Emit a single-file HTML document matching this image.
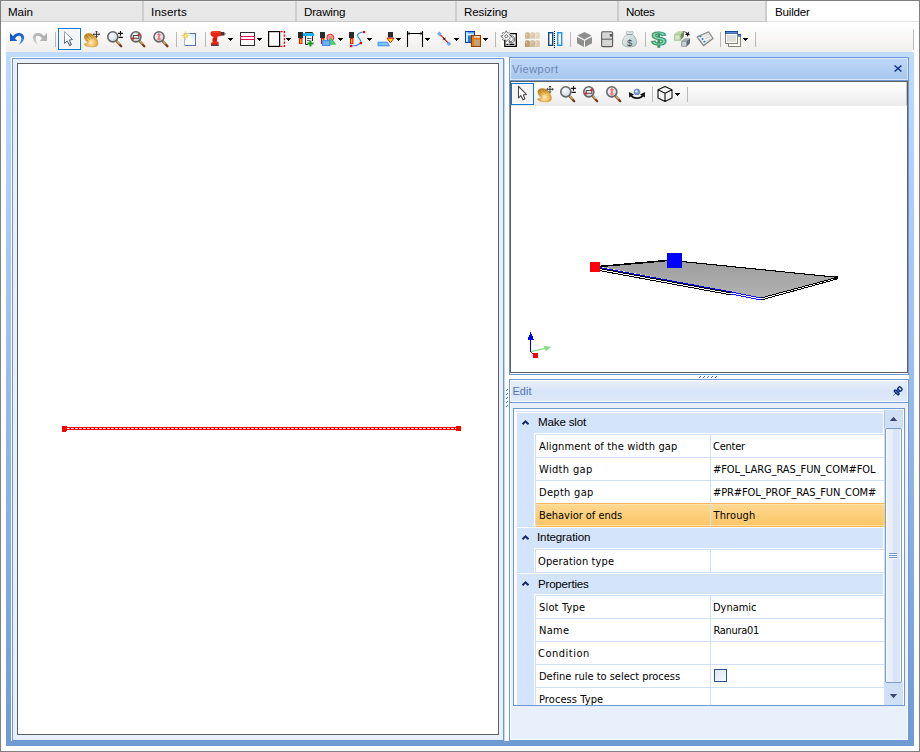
<!DOCTYPE html>
<html><head><meta charset="utf-8"><title>Builder</title>
<style>
html,body{margin:0;padding:0}
body{width:920px;height:752px;position:relative;overflow:hidden;background:#fff;font:11px "Liberation Sans",sans-serif;color:#000}
div,span,svg{position:absolute;box-sizing:border-box}
.t{white-space:nowrap;line-height:13px;height:13px}
</style></head>
<body>
<div style="left:0px;top:0px;width:920px;height:752px;border:1px solid #7f7f7f;background:#fff"></div>
<div style="left:1px;top:1px;width:918px;height:20px;background:linear-gradient(#f0f0f0 0,#f0f0f0 1px,#e7e7e7 1px)"></div>
<div style="left:1px;top:21px;width:918px;height:1px;background:#c9c9c9"></div>
<div style="left:142px;top:1px;width:2px;height:20px;background:#cdcdcd"></div>
<div style="left:295px;top:1px;width:2px;height:20px;background:#cdcdcd"></div>
<div style="left:455px;top:1px;width:2px;height:20px;background:#cdcdcd"></div>
<div style="left:617px;top:1px;width:2px;height:20px;background:#cdcdcd"></div>
<div style="left:765px;top:1px;width:2px;height:20px;background:#cdcdcd"></div>
<div style="left:767px;top:1px;width:152px;height:20px;background:#fff"></div>
<div style="left:767px;top:21px;width:152px;height:1px;background:#e2e2e2"></div>
<span class="t" style="z-index:3;left:8.00px;top:5px;font-family:'Liberation Sans',sans-serif;font-size:11.6px;letter-spacing:-0.094px;">Main</span>
<span class="t" style="z-index:3;left:151.00px;top:5px;font-family:'Liberation Sans',sans-serif;font-size:11.6px;letter-spacing:0.167px;">Inserts</span>
<span class="t" style="z-index:3;left:304.00px;top:5px;font-family:'Liberation Sans',sans-serif;font-size:11.6px;letter-spacing:-0.180px;">Drawing</span>
<span class="t" style="z-index:3;left:464.00px;top:5px;font-family:'Liberation Sans',sans-serif;font-size:11.6px;letter-spacing:-0.145px;">Resizing</span>
<span class="t" style="z-index:3;left:626.00px;top:5px;font-family:'Liberation Sans',sans-serif;font-size:11.6px;letter-spacing:-0.372px;">Notes</span>
<span class="t" style="z-index:3;left:775.00px;top:5px;font-family:'Liberation Sans',sans-serif;font-size:11.6px;letter-spacing:-0.205px;">Builder</span>
<div style="left:6px;top:27px;width:907px;height:25px;background:linear-gradient(#fdfdfd,#f7f6f5 50%,#f0eeec);border-radius:2px"></div>
<div style="left:913px;top:29px;width:1px;height:21px;background:#bdbdbd"></div>
<div style="left:55px;top:32px;width:1px;height:15px;background:#b9b9b9"></div>
<div style="left:176px;top:32px;width:1px;height:15px;background:#b9b9b9"></div>
<div style="left:205px;top:32px;width:1px;height:15px;background:#b9b9b9"></div>
<div style="left:495px;top:32px;width:1px;height:15px;background:#b9b9b9"></div>
<div style="left:570px;top:32px;width:1px;height:15px;background:#b9b9b9"></div>
<div style="left:645px;top:32px;width:1px;height:15px;background:#b9b9b9"></div>
<div style="left:720px;top:32px;width:1px;height:15px;background:#b9b9b9"></div>
<div style="left:755px;top:32px;width:1px;height:15px;background:#b9b9b9"></div>
<div style="left:58px;top:28px;width:23px;height:22px;border:1px solid #0a78d7;background:#f4f4f4;box-shadow:inset 0 0 0 1px #fcfaf5"></div>
<div style="left:228px;top:38px;width:5px;height:1px;background:#000"></div>
<div style="left:229px;top:39px;width:3px;height:1px;background:#000"></div>
<div style="left:230px;top:40px;width:1px;height:1px;background:#000"></div>
<div style="left:257px;top:38px;width:5px;height:1px;background:#000"></div>
<div style="left:258px;top:39px;width:3px;height:1px;background:#000"></div>
<div style="left:259px;top:40px;width:1px;height:1px;background:#000"></div>
<div style="left:286px;top:38px;width:5px;height:1px;background:#000"></div>
<div style="left:287px;top:39px;width:3px;height:1px;background:#000"></div>
<div style="left:288px;top:40px;width:1px;height:1px;background:#000"></div>
<div style="left:338px;top:38px;width:5px;height:1px;background:#000"></div>
<div style="left:339px;top:39px;width:3px;height:1px;background:#000"></div>
<div style="left:340px;top:40px;width:1px;height:1px;background:#000"></div>
<div style="left:367px;top:38px;width:5px;height:1px;background:#000"></div>
<div style="left:368px;top:39px;width:3px;height:1px;background:#000"></div>
<div style="left:369px;top:40px;width:1px;height:1px;background:#000"></div>
<div style="left:396px;top:38px;width:5px;height:1px;background:#000"></div>
<div style="left:397px;top:39px;width:3px;height:1px;background:#000"></div>
<div style="left:398px;top:40px;width:1px;height:1px;background:#000"></div>
<div style="left:425px;top:38px;width:5px;height:1px;background:#000"></div>
<div style="left:426px;top:39px;width:3px;height:1px;background:#000"></div>
<div style="left:427px;top:40px;width:1px;height:1px;background:#000"></div>
<div style="left:454px;top:38px;width:5px;height:1px;background:#000"></div>
<div style="left:455px;top:39px;width:3px;height:1px;background:#000"></div>
<div style="left:456px;top:40px;width:1px;height:1px;background:#000"></div>
<div style="left:483px;top:38px;width:5px;height:1px;background:#000"></div>
<div style="left:484px;top:39px;width:3px;height:1px;background:#000"></div>
<div style="left:485px;top:40px;width:1px;height:1px;background:#000"></div>
<div style="left:743px;top:38px;width:5px;height:1px;background:#000"></div>
<div style="left:744px;top:39px;width:3px;height:1px;background:#000"></div>
<div style="left:745px;top:40px;width:1px;height:1px;background:#000"></div>
<div style="left:6px;top:52px;width:908px;height:694px;background:linear-gradient(#bfdbff,#6f9bd3)"></div>
<div style="left:11px;top:57px;width:898px;height:684px;background:#fff"></div>
<div style="left:12px;top:58px;width:492px;height:683px;border:1px solid #6f97d4;background:#e8f0fb"></div>
<div style="left:504px;top:59px;width:1px;height:682px;background:#bcd6f7"></div>
<div style="left:17px;top:63px;width:482px;height:672px;border:1px solid #5f5f5f;background:#fff"></div>
<div style="left:67px;top:427px;width:390px;height:3px;background:#ff0000"></div>
<div style="left:67px;top:428px;width:390px;height:1px;background:repeating-linear-gradient(90deg,#fff 0,#fff 2px,#ff8a8a 2px,#ff8a8a 3px,#f00 3px,#f00 4px)"></div>
<div style="left:62px;top:426px;width:5px;height:5px;background:#ff0000"></div>
<div style="left:62px;top:431px;width:4px;height:1px;background:#ff0000"></div>
<div style="left:456px;top:426px;width:5px;height:5px;background:#ff0000"></div>
<div style="left:509px;top:57px;width:400px;height:318px;border:1px solid #6f97d4;background:#fff"></div>
<div style="left:510px;top:58px;width:398px;height:22px;background:#dce9fb"></div>
<div style="left:511px;top:59px;width:396px;height:20px;background:linear-gradient(#bcd7f9,#a8c7ee)"></div>
<div style="left:510px;top:80px;width:398px;height:1px;background:#6f97d4"></div>
<div style="left:510px;top:81px;width:398px;height:292px;border:1px solid #5f5f5f;background:#fff"></div>
<div style="left:511px;top:82px;width:396px;height:24px;background:linear-gradient(#ffffff,#ececec)"></div>
<div style="left:906px;top:82px;width:1px;height:23px;background:#c4c4c4"></div>
<span class="t" style="z-index:3;left:512.00px;top:63px;font-family:'Liberation Sans',sans-serif;font-size:11px;letter-spacing:0.494px;color:#6e86b4">Viewport</span>
<div style="left:511px;top:83px;width:23px;height:22px;border:1px solid #0a78d7;background:#f4f4f4;box-shadow:inset 0 0 0 1px #fcfaf5"></div>
<div style="left:652px;top:87px;width:1px;height:15px;background:#b9b9b9"></div>
<div style="left:687px;top:87px;width:1px;height:15px;background:#b9b9b9"></div>
<div style="left:675px;top:93px;width:5px;height:1px;background:#000"></div>
<div style="left:676px;top:94px;width:3px;height:1px;background:#000"></div>
<div style="left:677px;top:95px;width:1px;height:1px;background:#000"></div>
<svg style="left:0;top:0" width="920" height="752" viewBox="0 0 920 752" fill="#3b6fc9" shape-rendering="crispEdges"><rect x="700" y="376" width="1" height="1"/><rect x="699" y="377" width="1" height="1"/><rect x="704" y="376" width="1" height="1"/><rect x="703" y="377" width="1" height="1"/><rect x="708" y="376" width="1" height="1"/><rect x="707" y="377" width="1" height="1"/><rect x="712" y="376" width="1" height="1"/><rect x="711" y="377" width="1" height="1"/><rect x="716" y="376" width="1" height="1"/><rect x="715" y="377" width="1" height="1"/><rect x="507" y="389" width="1" height="1"/><rect x="506" y="390" width="1" height="1"/><rect x="507" y="393" width="1" height="1"/><rect x="506" y="394" width="1" height="1"/><rect x="507" y="397" width="1" height="1"/><rect x="506" y="398" width="1" height="1"/><rect x="507" y="401" width="1" height="1"/><rect x="506" y="402" width="1" height="1"/><rect x="507" y="405" width="1" height="1"/><rect x="506" y="406" width="1" height="1"/></svg>
<div style="left:509px;top:379px;width:400px;height:362px;border:1px solid #6f97d4;background:#fff"></div>
<div style="left:511px;top:381px;width:396px;height:20px;background:linear-gradient(#e9eff9,#d7e5f8 55%,#dfe9f9)"></div>
<div style="left:510px;top:402px;width:398px;height:1px;background:#6f97d4"></div>
<div style="left:511px;top:403px;width:396px;height:336px;background:#e8f0fb"></div>
<span class="t" style="z-index:3;left:512.50px;top:385px;font-family:'Liberation Sans',sans-serif;font-size:11px;letter-spacing:0.034px;color:#5373b0">Edit</span>
<div style="left:513px;top:408px;width:392px;height:298px;border:1px solid #6f97d4;background:#fff"></div>
<div style="left:884px;top:410px;width:19px;height:295px;background:#cfdff5"></div>
<div style="left:884px;top:410px;width:1px;height:18px;background:#a9c3ea"></div>
<div style="left:902px;top:429px;width:1px;height:253px;background:#fff"></div>
<div style="left:885px;top:428px;width:17px;height:255px;border:1px solid #7b9bc8;border-radius:2px;background:linear-gradient(90deg,#fff 0,#fff 1px,#e9f0fb 1px,#e6eefa 45%,#d7e4f5 50%,#dbe7f7 14px,#fff 14px)"></div>
<svg style="left:885px;top:410px" width="18" height="295" viewBox="885 410 18 295"><polygon points="889.8,421 897.2,421 893.5,416.8" fill="#3d4668"/><polygon points="889.8,694 897.2,694 893.5,698.2" fill="#3d4668"/></svg>
<div style="left:889px;top:553px;width:8px;height:1px;background:#7a98c8"></div>
<div style="left:889px;top:554px;width:8px;height:1px;background:#f4f8fd"></div>
<div style="left:889px;top:555px;width:8px;height:1px;background:#7a98c8"></div>
<div style="left:889px;top:556px;width:8px;height:1px;background:#f4f8fd"></div>
<div style="left:889px;top:557px;width:8px;height:1px;background:#7a98c8"></div>
<div style="left:889px;top:558px;width:8px;height:1px;background:#f4f8fd"></div>
<div style="left:514px;top:409px;width:371px;height:296px;overflow:hidden">
<div style="left:2px;top:2px;width:369px;height:1px;background:#cfdff5"></div>
<div style="left:3px;top:4px;width:366px;height:20px;background:#d4e4fa"></div>
<svg style="left:7px;top:10px" width="9" height="7" viewBox="0 0 9 7"><path d="M1.5 5.3 L4.5 2.4 L7.5 5.3" fill="none" stroke="#15286b" stroke-width="2"/></svg>
<span class="t" style="z-index:3;left:24.00px;top:6px;font-family:'Liberation Sans',sans-serif;font-size:11.6px;letter-spacing:-0.174px;">Make slot</span>
<div style="left:21px;top:25px;width:350px;height:1px;background:#cfdff5"></div>
<div style="left:3px;top:24px;width:17px;height:93px;background:#d4e4fa"></div>
<div style="left:21px;top:25px;width:1px;height:92px;background:#cfdff5"></div>
<div style="left:196px;top:26px;width:1px;height:22px;background:#cfdff5"></div>
<span class="t" style="z-index:3;left:25.00px;top:31px;font-family:'DejaVu Sans Condensed',sans-serif;font-size:11px;letter-spacing:0.133px;">Alignment of the width gap</span>
<span class="t" style="z-index:3;left:199.00px;top:31px;font-family:'DejaVu Sans Condensed',sans-serif;font-size:11px;letter-spacing:-0.249px;">Center</span>
<div style="left:22px;top:48px;width:349px;height:1px;background:#cfdff5"></div>
<div style="left:196px;top:49px;width:1px;height:22px;background:#cfdff5"></div>
<span class="t" style="z-index:3;left:25.00px;top:54px;font-family:'DejaVu Sans Condensed',sans-serif;font-size:11px;letter-spacing:0.347px;">Width gap</span>
<span class="t" style="z-index:3;left:199.00px;top:54px;font-family:'DejaVu Sans Condensed',sans-serif;font-size:11px;letter-spacing:-0.083px;">#FOL_LARG_RAS_FUN_COM#FOL</span>
<div style="left:22px;top:71px;width:349px;height:1px;background:#cfdff5"></div>
<div style="left:196px;top:72px;width:1px;height:22px;background:#cfdff5"></div>
<span class="t" style="z-index:3;left:25.00px;top:77px;font-family:'DejaVu Sans Condensed',sans-serif;font-size:11px;letter-spacing:0.295px;">Depth gap</span>
<span class="t" style="z-index:3;left:199.00px;top:77px;font-family:'DejaVu Sans Condensed',sans-serif;font-size:11px;letter-spacing:-0.108px;">#PR#FOL_PROF_RAS_FUN_COM#</span>
<div style="left:22px;top:94px;width:349px;height:1px;background:#cfdff5"></div>
<div style="left:22px;top:94px;width:349px;height:24px;background:linear-gradient(#fbb660 0,#fbb660 1px,#fee0a6 1px,#fee0a6 2px,#fdd890 2px,#fcc766 22px,#fedfa4 22px,#fedfa4 23px,#fbb660 23px);z-index:2"></div>
<div style="left:196px;top:94px;width:1px;height:24px;background:#cfdff5;z-index:2"></div>
<span class="t" style="z-index:3;left:25.00px;top:100px;font-family:'DejaVu Sans Condensed',sans-serif;font-size:11px;letter-spacing:-0.027px;">Behavior of ends</span>
<span class="t" style="z-index:3;left:199.50px;top:100px;font-family:'DejaVu Sans Condensed',sans-serif;font-size:11px;letter-spacing:0.125px;">Through</span>
<div style="left:2px;top:117px;width:369px;height:1px;background:#cfdff5"></div>
<div style="left:3px;top:119px;width:366px;height:20px;background:#d4e4fa"></div>
<svg style="left:7px;top:125px" width="9" height="7" viewBox="0 0 9 7"><path d="M1.5 5.3 L4.5 2.4 L7.5 5.3" fill="none" stroke="#15286b" stroke-width="2"/></svg>
<span class="t" style="z-index:3;left:23.00px;top:121px;font-family:'Liberation Sans',sans-serif;font-size:11.6px;letter-spacing:-0.134px;">Integration</span>
<div style="left:21px;top:140px;width:350px;height:1px;background:#cfdff5"></div>
<div style="left:3px;top:139px;width:17px;height:24px;background:#d4e4fa"></div>
<div style="left:21px;top:140px;width:1px;height:23px;background:#cfdff5"></div>
<div style="left:196px;top:141px;width:1px;height:22px;background:#cfdff5"></div>
<span class="t" style="z-index:3;left:24.00px;top:146px;font-family:'DejaVu Sans Condensed',sans-serif;font-size:11px;letter-spacing:0.123px;">Operation type</span>
<div style="left:22px;top:163px;width:349px;height:1px;background:#cfdff5"></div>
<div style="left:2px;top:163px;width:369px;height:1px;background:#cfdff5"></div>
<div style="left:3px;top:165px;width:366px;height:20px;background:#d4e4fa"></div>
<svg style="left:7px;top:171px" width="9" height="7" viewBox="0 0 9 7"><path d="M1.5 5.3 L4.5 2.4 L7.5 5.3" fill="none" stroke="#15286b" stroke-width="2"/></svg>
<span class="t" style="z-index:3;left:24.00px;top:168px;font-family:'Liberation Sans',sans-serif;font-size:11.6px;letter-spacing:-0.227px;">Properties</span>
<div style="left:21px;top:186px;width:350px;height:1px;background:#cfdff5"></div>
<div style="left:3px;top:185px;width:17px;height:116px;background:#d4e4fa"></div>
<div style="left:21px;top:186px;width:1px;height:115px;background:#cfdff5"></div>
<div style="left:196px;top:187px;width:1px;height:22px;background:#cfdff5"></div>
<span class="t" style="z-index:3;left:25.00px;top:192px;font-family:'DejaVu Sans Condensed',sans-serif;font-size:11px;letter-spacing:0.178px;">Slot Type</span>
<span class="t" style="z-index:3;left:199.00px;top:192px;font-family:'DejaVu Sans Condensed',sans-serif;font-size:11px;letter-spacing:-0.034px;">Dynamic</span>
<div style="left:22px;top:209px;width:349px;height:1px;background:#cfdff5"></div>
<div style="left:196px;top:210px;width:1px;height:22px;background:#cfdff5"></div>
<span class="t" style="z-index:3;left:25.00px;top:215px;font-family:'DejaVu Sans Condensed',sans-serif;font-size:11px;letter-spacing:0.298px;">Name</span>
<span class="t" style="z-index:3;left:199.50px;top:215px;font-family:'DejaVu Sans Condensed',sans-serif;font-size:11px;letter-spacing:-0.310px;">Ranura01</span>
<div style="left:22px;top:232px;width:349px;height:1px;background:#cfdff5"></div>
<div style="left:196px;top:233px;width:1px;height:22px;background:#cfdff5"></div>
<span class="t" style="z-index:3;left:24.00px;top:238px;font-family:'DejaVu Sans Condensed',sans-serif;font-size:11px;letter-spacing:0.506px;">Condition</span>
<div style="left:22px;top:255px;width:349px;height:1px;background:#cfdff5"></div>
<div style="left:196px;top:256px;width:1px;height:22px;background:#cfdff5"></div>
<span class="t" style="z-index:3;left:25.00px;top:261px;font-family:'DejaVu Sans Condensed',sans-serif;font-size:11px;letter-spacing:-0.009px;">Define rule to select process</span>
<div style="left:200px;top:260px;width:13px;height:13px;border:1px solid #2a4f8f;background:linear-gradient(135deg,#dfe6ee,#f7f9fb)"></div>
<div style="left:22px;top:278px;width:349px;height:1px;background:#cfdff5"></div>
<div style="left:196px;top:279px;width:1px;height:22px;background:#cfdff5"></div>
<span class="t" style="z-index:3;left:25.00px;top:284px;font-family:'DejaVu Sans Condensed',sans-serif;font-size:11px;letter-spacing:0.081px;">Process Type</span>
<div style="left:22px;top:301px;width:349px;height:1px;background:#cfdff5"></div>
</div>

<svg style="left:511px;top:106px" width="396" height="266" viewBox="511 106 396 266">
<defs><linearGradient id="pl" x1="0" y1="0" x2="0" y2="1"><stop offset="0" stop-color="#9d9d9d"/><stop offset="1" stop-color="#b2b2b2"/></linearGradient></defs>
<g shape-rendering="crispEdges">
<polygon points="599,266.5 670,260 837,277 761,297.5" fill="url(#pl)"/>
<polyline points="599,266.5 670,260.3" fill="none" stroke="#000" stroke-width="1.6"/><polyline points="670,260.3 837,277.3" fill="none" stroke="#000" stroke-width="1.1"/>
<line x1="599" y1="267.5" x2="731" y2="291.944" stroke="#0000e6" stroke-width="1"/>
<line x1="599" y1="268.5" x2="731" y2="292.944" stroke="#000" stroke-width="1"/>
<line x1="599" y1="269.5" x2="731" y2="293.944" stroke="#fff" stroke-width="1"/>
<line x1="599" y1="270.5" x2="731" y2="294.944" stroke="#000" stroke-width="1"/>
<line x1="731.5" y1="291.444" x2="731.5" y2="295.444" stroke="#000" stroke-width="1"/>
<line x1="731" y1="291.944" x2="761" y2="298" stroke="#1414ff" stroke-width="1"/>
<line x1="731" y1="292.944" x2="761" y2="299" stroke="#fff" stroke-width="1"/>
<line x1="731" y1="293.944" x2="761" y2="300" stroke="#1414ff" stroke-width="1"/>
<line x1="761" y1="298" x2="837" y2="277.5" stroke="#000" stroke-width="1"/>
<line x1="761" y1="299" x2="837" y2="278.5" stroke="#fff" stroke-width="1"/>
<line x1="761" y1="300" x2="837" y2="279" stroke="#000" stroke-width="1"/>
<rect x="835" y="276" width="3" height="3" fill="#000"/>
<rect x="590" y="262" width="10" height="10" fill="#ff0000"/>
<rect x="667" y="253" width="15" height="15" fill="#0000ff"/>
<rect x="530" y="338" width="1.3" height="14" fill="#0000ff"/>
<polygon points="530.6,331.6 527.6,340 534,340" fill="#0000ff"/>
<rect x="533" y="353" width="5" height="5" fill="#ff0000"/>
</g>
<line x1="531" y1="352" x2="534" y2="355" stroke="#f00" stroke-width="1"/>
<line x1="531" y1="351.6" x2="545" y2="348.4" stroke="#7fe07f" stroke-width="1.2"/>
<polygon points="543.6,346 551.2,346.8 546,351" fill="#7fe07f"/>
</svg>
<svg style="left:0;top:0" width="920" height="110" viewBox="0 0 920 110">
<defs>
<radialGradient id="lensg" cx="0.38" cy="0.35" r="0.75"><stop offset="0" stop-color="#fbfcfd"/><stop offset="0.55" stop-color="#dde5ea"/><stop offset="1" stop-color="#b9c6cf"/></radialGradient>
<linearGradient id="undog" x1="0" y1="0" x2="1" y2="1"><stop offset="0" stop-color="#0a4ec6"/><stop offset="0.6" stop-color="#1c68d8"/><stop offset="1" stop-color="#7fb0ee"/></linearGradient>
<linearGradient id="redog" x1="1" y1="0" x2="0" y2="1"><stop offset="0" stop-color="#a9a9a9"/><stop offset="0.6" stop-color="#b9b9b9"/><stop offset="1" stop-color="#e4e4e4"/></linearGradient>
<radialGradient id="handg" cx="0.5" cy="0.68" r="0.62"><stop offset="0" stop-color="#fdebbc"/><stop offset="0.5" stop-color="#f0c060"/><stop offset="1" stop-color="#c48a24"/></radialGradient>
<linearGradient id="docg" x1="1" y1="0" x2="0.2" y2="0.8"><stop offset="0" stop-color="#bfe0fb"/><stop offset="0.5" stop-color="#f4faff"/><stop offset="1" stop-color="#ffffff"/></linearGradient>
<linearGradient id="tang" x1="0" y1="0" x2="1" y2="0"><stop offset="0" stop-color="#cfb08a"/><stop offset="1" stop-color="#e0ccb2"/></linearGradient>
<linearGradient id="tang2" x1="0" y1="0" x2="1" y2="0"><stop offset="0" stop-color="#b48a5c"/><stop offset="1" stop-color="#d6bd9e"/></linearGradient>
<linearGradient id="bagg" x1="0" y1="0" x2="1" y2="1"><stop offset="0" stop-color="#f2f6f6"/><stop offset="1" stop-color="#b4c6c6"/></linearGradient>
<linearGradient id="wing" x1="0" y1="0" x2="1" y2="1"><stop offset="0" stop-color="#cfcfcf"/><stop offset="1" stop-color="#ececec"/></linearGradient>
<linearGradient id="curg" gradientUnits="userSpaceOnUse" x1="64" y1="31" x2="72" y2="46"><stop offset="0" stop-color="#a9bbd9"/><stop offset="0.55" stop-color="#5f7599"/><stop offset="1" stop-color="#1f2f4f"/></linearGradient>
<linearGradient id="curf" gradientUnits="userSpaceOnUse" x1="64" y1="31" x2="72" y2="46"><stop offset="0" stop-color="#ffffff"/><stop offset="0.6" stop-color="#ffffff"/><stop offset="1" stop-color="#c8d2ec"/></linearGradient>
</defs>

<!-- undo -->
<path d="M10 33 L10 41 L17.4 41 L15 38.6 C16.4 35.9 20 34.6 21.2 37.4 C21.9 39.8 20.4 42.6 18.6 44.8 C22.4 43 24.8 39.6 24 36.4 C23 32.4 16.4 31.6 13 36.2 Z" fill="url(#undog)"/>
<!-- redo -->
<path d="M47 33 L47 41 L39.6 41 L42 38.6 C40.6 35.9 37 34.6 35.8 37.4 C35.1 39.8 36.6 42.6 38.4 44.8 C34.6 43 32.2 39.6 33 36.4 C34 32.4 40.6 31.6 44 36.2 Z" fill="url(#redog)"/>
<!-- cursor -->
<path d="M64.5 31.4 L64.5 43.4 L67.3 40.8 L69.6 45.6 L71.3 44.7 L69.3 40 L72.5 39.5 Z" fill="url(#curf)" stroke="url(#curg)" stroke-width="1" stroke-linejoin="round"/>
<g transform="translate(83,31)">
 <path d="M1.3 5.4 C1.5 3.8 3 2.6 4.6 2.5 C6.4 2.2 8.6 2.6 10.2 4 C12 5.4 13.4 7 14.2 9 C15.2 11.4 15.2 13.8 13.8 15 C12 16 9.4 15.9 7.2 15.7 C5.4 15.6 3.8 15.4 2.6 14.8 C1.4 14.2 0.8 13.4 1.4 12.8 C2.2 12.2 3.6 12.4 4.6 12.2 C4.4 11.6 4 11.2 3.6 10.8 C2.4 9.4 1.4 7.6 1.3 5.4 Z" fill="url(#handg)" stroke="#c8922e" stroke-width="0.5"/>
 <path d="M3 4 L6.8 8.8 M5.6 3 L9.4 7.8 M2 6.4 L5.4 10.8 M8.2 3.2 L10.8 6.4" stroke="#9a640a" stroke-width="0.8" stroke-dasharray="1 0.6" fill="none"/>
 <path d="M13.5 0 V6.6 M10.2 3.3 H16.8" stroke="#333" stroke-width="0.95" fill="none"/>
 <path d="M12.4 1.2 L13.5 0 L14.6 1.2 M12.4 5.4 L13.5 6.6 L14.6 5.4 M11.4 2.2 L10.2 3.3 L11.4 4.4 M15.6 2.2 L16.8 3.3 L15.6 4.4" stroke="#333" stroke-width="0.8" fill="none"/>
</g>
<g transform="translate(106,31)">
 <line x1="10.6" y1="10.2" x2="15.2" y2="15.2" stroke="#7c3a20" stroke-width="2.4" stroke-linecap="round"/>
 <line x1="10.4" y1="10" x2="13.4" y2="13.3" stroke="#b08848" stroke-width="2.2"/>
 <line x1="10.8" y1="9.6" x2="13.6" y2="12.6" stroke="#e2bf78" stroke-width="0.7"/>
 <circle cx="6.8" cy="5.8" r="5.05" fill="url(#lensg)" stroke="#666" stroke-width="1.55"/>
</g><g transform="translate(106,31)">
 <path d="M14.5 0 V4.8 M12.1 2.4 H16.9 M12.5 6.4 H16.9" stroke="#111" stroke-width="1.1" fill="none"/>
</g>
<g transform="translate(129.1,31)">
 <line x1="10.6" y1="10.2" x2="15.2" y2="15.2" stroke="#7c3a20" stroke-width="2.4" stroke-linecap="round"/>
 <line x1="10.4" y1="10" x2="13.4" y2="13.3" stroke="#b08848" stroke-width="2.2"/>
 <line x1="10.8" y1="9.6" x2="13.6" y2="12.6" stroke="#e2bf78" stroke-width="0.7"/>
 <circle cx="6.8" cy="5.8" r="5.05" fill="url(#lensg)" stroke="#666" stroke-width="1.55"/>
</g><g transform="translate(129.1,31)">
 <rect x="4.2" y="4.5" width="5.6" height="2.8" fill="none" stroke="#505050" stroke-width="1"/>
 <path d="M9.6 2.4 v3.2 M8 4 h3.2 M4 5.9 v3.2 M2.4 7.5 h3.2" stroke="#d42020" stroke-width="1"/>
</g>
<g transform="translate(152.2,31)">
 <line x1="10.6" y1="10.2" x2="15.2" y2="15.2" stroke="#7c3a20" stroke-width="2.4" stroke-linecap="round"/>
 <line x1="10.4" y1="10" x2="13.4" y2="13.3" stroke="#b08848" stroke-width="2.2"/>
 <line x1="10.8" y1="9.6" x2="13.6" y2="12.6" stroke="#e2bf78" stroke-width="0.7"/>
 <circle cx="6.8" cy="5.8" r="5.05" fill="url(#lensg)" stroke="#666" stroke-width="1.55"/>
</g><g transform="translate(152.2,31)">
 <path d="M6.8 2 L4.9 3.9 H6 V7.7 H4.9 L6.8 9.6 L8.7 7.7 H7.6 V3.9 H8.7 Z" fill="#f87272" stroke="#f87272" stroke-width="0.5"/>
</g>
<!-- new -->
<rect x="184.5" y="33.5" width="11" height="12" fill="url(#docg)" stroke="#5672b9" stroke-width="1"/>
<path d="M184.5 46 V33.5 H190" fill="none" stroke="#a4bde6" stroke-width="1"/>
<polygon points="185.5,31.3 186.0,34.4 187.8,33.3 186.7,35.1 189.8,35.6 186.7,36.1 187.8,37.9 186.0,36.8 185.5,39.9 185.0,36.8 183.2,37.9 184.3,36.1 181.2,35.6 184.3,35.1 183.2,33.3 185.0,34.4" fill="#e9bd1c" stroke="#f1d35a" stroke-width="0.5"/>
<circle cx="185.5" cy="35.6" r="1.2" fill="#fff6a8"/>
<!-- drill -->
<path d="M210.5 33 C210.5 31.4 212 31 214 31 H220 L221 32 V36 L217.6 36.6 L216.8 41.8 H218.6 V46 H211 V43 L212.4 42 L213.4 36.8 C211.4 36.6 210.5 35 210.5 33 Z" fill="#ea2212"/>
<path d="M221 32 H224.4 V35.6 H221 Z" fill="#3a3a3a"/><path d="M224.4 33.2 H225.6 V34.4 H224.4 Z" fill="#555"/>
<path d="M211 44.6 H218.6 V46 H211 Z" fill="#444"/>
<path d="M212.6 38 L216.6 38.4 L216.2 41 L212.2 40.6 Z" fill="#c41408" opacity="0.7"/>
<path d="M212 32 H219" stroke="#ff6a50" stroke-width="0.8"/>
<!-- slot -->
<rect x="240.5" y="32.5" width="14" height="13" fill="#fff" stroke="#2e2e2e" stroke-width="1"/>
<rect x="240.5" y="36.5" width="14" height="3" fill="#fff" stroke="#e1104c" stroke-width="1"/>
<!-- panel with dashed -->
<rect x="268.6" y="31.6" width="11" height="14.8" fill="#fff" stroke="#000" stroke-width="1.2"/>
<path d="M280.4 31.6 H284.4 V46.4 H280.4" fill="none" stroke="#f00" stroke-width="1.35" stroke-dasharray="2.2 1.3"/>
<!-- tool + list -->
<g transform="translate(298,32)">
 <rect x="0" y="0" width="5" height="6" fill="#2b2b2b"/>
 <rect x="1" y="6" width="3.4" height="6" fill="#ee1010"/>
 <rect x="2.1" y="7" width="1.2" height="4.4" fill="#ffe000"/>
</g>
<path d="M305.5 32.5 H312.5 V41 M305.5 32.5 V44.5 H308" fill="none" stroke="#2a2a2a" stroke-width="1"/>
<path d="M307 38.5 H311.5 M307 40.5 H310" stroke="#555" stroke-width="0.9"/>
<rect x="303" y="33.2" width="11" height="2.8" fill="#10b4f4"/>
<path d="M310.4 40.4 V46.6 M307.3 43.5 H313.5" stroke="#189a18" stroke-width="2"/>
<!-- tool + shapes -->
<g transform="translate(320,32)">
 <rect x="0" y="0" width="5" height="6" fill="#2b2b2b"/>
 <rect x="1" y="6" width="3.4" height="6" fill="#ee1010"/>
 <rect x="2.1" y="7" width="1.2" height="4.4" fill="#ffe000"/>
</g>
<circle cx="330.3" cy="37.7" r="3.5" fill="#f29a9a" stroke="#f01818" stroke-width="0.9"/>
<polygon points="326.5,44.3 335.8,44.3 330.6,38.2" fill="#4ad66a" stroke="#18b038" stroke-width="0.6"/>
<rect x="322.6" y="40.6" width="7.2" height="5" fill="#6fb0fb" stroke="#2f86f2" stroke-width="0.9"/>
<!-- tool + curve -->
<g transform="translate(349,32)">
 <rect x="0" y="0" width="5" height="6" fill="#2b2b2b"/>
 <rect x="1" y="6" width="3.4" height="6" fill="#ee1010"/>
 <rect x="2.1" y="7" width="1.2" height="4.4" fill="#ffe000"/>
</g>
<path d="M351 46 C355 46.4 358.4 45 360.8 43 C362.4 39.6 356 37 357.8 34.4 C359 32.8 361 32.2 364 32" fill="none" stroke="#2a8cff" stroke-width="1.1"/>
<rect x="350" y="45" width="2.2" height="2.2" fill="#f00"/><rect x="359.8" y="42" width="2.2" height="2.2" fill="#f00"/><rect x="363" y="31" width="2.2" height="2.2" fill="#f00"/>
<!-- tool + bar -->
<rect x="388" y="32" width="5" height="5.6" fill="#2b2b2b"/>
<polygon points="387,38.2 394,38.2 390.5,42.8" fill="#ffee00" stroke="#f01010" stroke-width="1"/>
<path d="M378 42.2 H387.2 L389.4 45.8 H378 Z" fill="#7cc4ff" stroke="#2f8cf0" stroke-width="0.9"/>
<!-- dimension -->
<path d="M407.5 31 V47 M422.5 31 V47 M407.5 33.5 H422.5" stroke="#000" stroke-width="1.1" fill="none"/>
<path d="M409.6 32.2 L408 33.5 L409.6 34.8 M420.4 32.2 L422 33.5 L420.4 34.8" stroke="#000" stroke-width="0.9" fill="none"/>
<!-- line -->
<path d="M439.5 33.8 L448.8 43.6" stroke="#f01010" stroke-width="1.2"/>
<rect x="-1.6" y="-1.6" width="3.2" height="3.2" fill="#62a8f8" transform="translate(439.4,33.7) rotate(45)"/>
<rect x="-1.6" y="-1.6" width="3.2" height="3.2" fill="#62a8f8" transform="translate(448.9,43.7) rotate(45)"/>
<path d="M442.8 39.6 L445.6 38 M443.4 37.2 L445 40.2" stroke="#111" stroke-width="0.8"/>
<!-- docs -->
<rect x="464" y="30" width="12" height="14" fill="#fff"/><rect x="470" y="34" width="12" height="14" fill="#fff"/>
<rect x="465.5" y="31.5" width="9" height="11" fill="#1684dc" stroke="#1038c8" stroke-width="1.1"/>
<rect x="466.1" y="32.1" width="1.7" height="9.8" fill="#e6f7ff"/>
<rect x="467.8" y="32.1" width="6.1" height="1.3" fill="#58ace8"/>
<rect x="467.8" y="33.4" width="6.1" height="2" fill="#d6f2ff"/>
<rect x="471.5" y="35.5" width="9" height="11" fill="#c4a474" stroke="#8c3c00" stroke-width="1.1"/>
<rect x="472.1" y="36.1" width="2" height="9.8" fill="#ff7200"/>
<rect x="474.1" y="36.1" width="5.8" height="1.7" fill="#f0e2bc"/>
<rect x="474.1" y="37.8" width="5.8" height="1.8" fill="#ff7200"/>
<!-- gear doc -->
<rect x="501" y="31" width="16.3" height="17" fill="#fff"/>
<path d="M509 33.6 H516.3 V46.3 H504.8 V40" fill="none" stroke="#000" stroke-width="1.3"/>
<path d="M506.4 44.4 H508.4 M509.4 44.4 H514.4" stroke="#000" stroke-width="1.1"/>
<path d="M510.6 36 C514 35.4 515 38 514.4 41 M509 42.4 C511 43.4 513.6 43 514.4 41 M512.6 37.4 C513.6 38.6 513.4 40.4 512.2 41.2" fill="none" stroke="#666" stroke-width="1"/>
<path d="M508.4 40.8 H512 V42.6 H508.4 Z" fill="#777"/>
<polygon points="509.9,35.5 511.4,35.6 511.4,37.0 509.9,37.1 509.4,38.3 510.4,39.4 509.4,40.4 508.3,39.4 507.1,39.9 507.0,41.4 505.6,41.4 505.5,39.9 504.3,39.4 503.2,40.4 502.2,39.4 503.2,38.3 502.7,37.1 501.2,37.0 501.2,35.6 502.7,35.5 503.2,34.3 502.2,33.2 503.2,32.2 504.3,33.2 505.5,32.7 505.6,31.2 507.0,31.2 507.1,32.7 508.3,33.2 509.4,32.2 510.4,33.2 509.4,34.3" fill="#fff" stroke="#3a3a3a" stroke-width="0.9" stroke-dasharray="1.3 0.6"/>
<rect x="-1.25" y="-1.25" width="2.5" height="2.5" transform="translate(506.3,36.3) rotate(45)" fill="#fff" stroke="#333" stroke-width="0.8"/>
<!-- boxes -->
<g>
<path d="M525 38.7 V33.4 Q525 32.2 527.45 32.2 Q529.9 32.2 529.9 33.4 V38.7 Z" fill="#d2b794"/>
<path d="M530.2 38.7 V33.4 Q530.2 32.2 532.6 32.2 Q535 32.2 535 33.4 V38.7 Z" fill="#dcc9ad"/>
<path d="M535.3 38.7 V33.4 Q535.3 32.2 537.6 32.2 Q539.9 32.2 539.9 33.4 V38.7 Z" fill="#e5d7c4"/>
<path d="M525 46.9 V41.4 Q525 40.2 527.45 40.2 Q529.9 40.2 529.9 41.4 V46.9 Z" fill="#c19e73"/>
<path d="M530.2 46.9 V41.4 Q530.2 40.2 532.6 40.2 Q535 40.2 535 41.4 V46.9 Z" fill="#d0b796"/>
<path d="M535.3 46.9 V41.4 Q535.3 40.2 537.6 40.2 Q539.9 40.2 539.9 41.4 V46.9 Z" fill="#dbc8b0"/>
<path d="M526.5 33.8 V35.2 M531.7 33.8 V35.2 M536.8 33.8 V35.2 M526.5 41.8 V43.2 M531.7 41.8 V43.2 M536.8 41.8 V43.2" stroke="#fff" stroke-width="0.9" opacity="0.6"/>
</g>
<!-- mirror -->
<rect x="548.7" y="32.7" width="4" height="12.6" fill="#fff" stroke="#0f4a86" stroke-width="1.4"/>
<rect x="557.7" y="32.7" width="4" height="12.6" fill="#fff" stroke="#1e92ff" stroke-width="1.4"/>
<g shape-rendering="crispEdges"><rect x="554" y="31" width="1" height="1" fill="#000"/><rect x="554" y="33" width="1" height="1" fill="#000"/><rect x="554" y="35" width="1" height="1" fill="#000"/><rect x="554" y="37" width="1" height="1" fill="#000"/><rect x="554" y="39" width="1" height="1" fill="#000"/><rect x="554" y="41" width="1" height="1" fill="#000"/><rect x="554" y="43" width="1" height="1" fill="#000"/><rect x="554" y="45" width="1" height="1" fill="#000"/><rect x="554" y="47" width="1" height="1" fill="#000"/></g>
<!-- cube gray -->
<g fill="#8e8e8e"><polygon points="577.4,35.6 584.5,32 591.6,35.6 584.5,39.4"/><polygon points="577,37 584,40.6 584,47 577,43.2"/><polygon points="585,40.6 592,37 592,43.2 585,47"/></g>
<!-- door -->
<rect x="601.6" y="31.8" width="11" height="14.8" rx="1.2" fill="#d6d6d6" stroke="#5a5a5a" stroke-width="1.1"/>
<path d="M602 39.2 H612.4" stroke="#5a5a5a" stroke-width="1"/><rect x="609.8" y="34" width="2.4" height="2.6" fill="#555"/>
<!-- money bag -->
<path d="M627 34.4 C626 33 626 31.6 627.4 31.4 C629 32 631 32 632.4 31.4 C633.6 31.8 633.4 33.2 632.4 34.4 C635.4 36.6 637.4 41 636.4 44 C635.8 46.4 632.6 46.8 629.6 46.8 C626.6 46.8 623.4 46.4 622.6 44 C621.8 41 624 36.6 627 34.4 Z" fill="url(#bagg)" stroke="#8fa4a4" stroke-width="0.7"/>
<path d="M627 34.6 H632.4" stroke="#7e9494" stroke-width="0.9"/>
<!-- green dollar drawn as shapes below (text) -->
<!-- cubes -->
<g>
<polygon points="674.2,34.3 677.8,31.3 684.2,31.3 680.4,34.3" fill="#bdd6a6"/>
<polygon points="680.4,34.3 684.2,31.3 683.8,36.8 680.4,40.5" fill="#6c8a5a"/>
<rect x="674.7" y="34.8" width="5.4" height="5.4" fill="#d6e7ca" stroke="#9bbf86" stroke-width="1"/>
<polygon points="681.2,41 684.6,38.2 690.2,38.2 686.7,41" fill="#a3adb3"/>
<polygon points="686.7,41 690.2,38.2 689.8,43.6 686.7,46.5" fill="#5c6a72"/>
<rect x="681.7" y="41.4" width="4.8" height="4.8" fill="#cdd7d9" stroke="#8b99a1" stroke-width="1"/>
<path d="M682.6 31.6 C684.6 31.4 686.2 32.2 687 33.4" fill="none" stroke="#555" stroke-width="0.7"/>
<path d="M685.4 31.8 L687.6 33 L689.2 31.6 L688.8 33.9 L690.4 35 L688.2 35.2 L687.4 37 L686.8 34.9 L684.8 34.6 L686.4 33.6 Z" fill="#111"/>
</g>
<!-- note -->
<g>
<polygon points="697.1,36.9 708.6,31.9 713,38.4 703.4,45.7" fill="#f1f1ef" stroke="#8f8f8f" stroke-width="1.2" stroke-linejoin="round"/>
<path d="M703.6 36.6 L709 34.2 M705 38.8 L710.4 36.4 M706.6 41 L711.6 38.6" stroke="#cfcfcf" stroke-width="0.9"/>
<path d="M699.6 36.8 l1.8 -0.8 M701.6 39.4 l1.8 -0.8 M703.6 42 l1.8 -0.8" stroke="#3a8ae8" stroke-width="1.7"/>
<path d="M698.4 38.6 L703.6 45.4 L712.6 38.8" fill="none" stroke="#7e7e7e" stroke-width="0.8"/>
</g>
<!-- windows -->
<rect x="728.5" y="34.5" width="12" height="12" fill="#fff" stroke="#868678" stroke-width="1"/>
<rect x="728" y="34" width="13" height="2.6" fill="#1c4898"/><rect x="738.4" y="35" width="2" height="1" fill="#6a9ae0"/>
<rect x="725.5" y="31.5" width="12" height="12" fill="#fff" stroke="#868678" stroke-width="1"/>
<rect x="727" y="35" width="9" height="6.8" fill="#dfdfdb"/>
<rect x="725" y="31" width="13" height="2.8" fill="#1c4898"/><rect x="726" y="32" width="11" height="1" fill="#5a8ad0"/>

<path d="M518.5 86.4 L518.5 98 L520.8 95.6 L523 99.8 L524.9 98.9 L523.3 94.9 L526.4 94.4 Z" fill="#fff" stroke="#444" stroke-width="1.05" stroke-linejoin="round"/>
<g transform="translate(536.5,86)">
 <path d="M1.3 5.4 C1.5 3.8 3 2.6 4.6 2.5 C6.4 2.2 8.6 2.6 10.2 4 C12 5.4 13.4 7 14.2 9 C15.2 11.4 15.2 13.8 13.8 15 C12 16 9.4 15.9 7.2 15.7 C5.4 15.6 3.8 15.4 2.6 14.8 C1.4 14.2 0.8 13.4 1.4 12.8 C2.2 12.2 3.6 12.4 4.6 12.2 C4.4 11.6 4 11.2 3.6 10.8 C2.4 9.4 1.4 7.6 1.3 5.4 Z" fill="url(#handg)" stroke="#c8922e" stroke-width="0.5"/>
 <path d="M3 4 L6.8 8.8 M5.6 3 L9.4 7.8 M2 6.4 L5.4 10.8 M8.2 3.2 L10.8 6.4" stroke="#9a640a" stroke-width="0.8" stroke-dasharray="1 0.6" fill="none"/>
 <path d="M13.5 0 V6.6 M10.2 3.3 H16.8" stroke="#333" stroke-width="0.95" fill="none"/>
 <path d="M12.4 1.2 L13.5 0 L14.6 1.2 M12.4 5.4 L13.5 6.6 L14.6 5.4 M11.4 2.2 L10.2 3.3 L11.4 4.4 M15.6 2.2 L16.8 3.3 L15.6 4.4" stroke="#333" stroke-width="0.8" fill="none"/>
</g>
<g transform="translate(559,86)">
 <line x1="10.6" y1="10.2" x2="15.2" y2="15.2" stroke="#7c3a20" stroke-width="2.4" stroke-linecap="round"/>
 <line x1="10.4" y1="10" x2="13.4" y2="13.3" stroke="#b08848" stroke-width="2.2"/>
 <line x1="10.8" y1="9.6" x2="13.6" y2="12.6" stroke="#e2bf78" stroke-width="0.7"/>
 <circle cx="6.8" cy="5.8" r="5.05" fill="url(#lensg)" stroke="#666" stroke-width="1.55"/>
</g><g transform="translate(559,86)">
 <path d="M14.5 0 V4.8 M12.1 2.4 H16.9 M12.5 6.4 H16.9" stroke="#111" stroke-width="1.1" fill="none"/>
</g>
<g transform="translate(582,86)">
 <line x1="10.6" y1="10.2" x2="15.2" y2="15.2" stroke="#7c3a20" stroke-width="2.4" stroke-linecap="round"/>
 <line x1="10.4" y1="10" x2="13.4" y2="13.3" stroke="#b08848" stroke-width="2.2"/>
 <line x1="10.8" y1="9.6" x2="13.6" y2="12.6" stroke="#e2bf78" stroke-width="0.7"/>
 <circle cx="6.8" cy="5.8" r="5.05" fill="url(#lensg)" stroke="#666" stroke-width="1.55"/>
</g><g transform="translate(582,86)">
 <rect x="4.2" y="4.5" width="5.6" height="2.8" fill="none" stroke="#505050" stroke-width="1"/>
 <path d="M9.6 2.4 v3.2 M8 4 h3.2 M4 5.9 v3.2 M2.4 7.5 h3.2" stroke="#d42020" stroke-width="1"/>
</g>
<g transform="translate(605,86)">
 <line x1="10.6" y1="10.2" x2="15.2" y2="15.2" stroke="#7c3a20" stroke-width="2.4" stroke-linecap="round"/>
 <line x1="10.4" y1="10" x2="13.4" y2="13.3" stroke="#b08848" stroke-width="2.2"/>
 <line x1="10.8" y1="9.6" x2="13.6" y2="12.6" stroke="#e2bf78" stroke-width="0.7"/>
 <circle cx="6.8" cy="5.8" r="5.05" fill="url(#lensg)" stroke="#666" stroke-width="1.55"/>
</g><g transform="translate(605,86)">
 <path d="M6.8 2 L4.9 3.9 H6 V7.7 H4.9 L6.8 9.6 L8.7 7.7 H7.6 V3.9 H8.7 Z" fill="#f87272" stroke="#f87272" stroke-width="0.5"/>
</g>
<!-- orbit -->
<path d="M630.6 94.4 C633 99.4 641 99.4 643.4 94.4" fill="none" stroke="#151515" stroke-width="1.9"/>
<polygon points="628.9,92.1 629.2,97.4 634,94.4" fill="#151515"/><polygon points="645.1,92.1 644.8,97.4 640,94.4" fill="#151515"/>
<circle cx="636.9" cy="91.9" r="2.9" fill="#6f9ad6" stroke="#4a74b4" stroke-width="0.6"/><circle cx="636.4" cy="91.4" r="1.2" fill="#eef5ff"/>
<!-- cube wire -->
<path d="M665 86.4 L672 89.8 V98 L665 101.4 L658 98 V89.8 Z M658 89.8 L665 93.2 L672 89.8 M665 93.2 V101.4" fill="none" stroke="#111" stroke-width="1.1" stroke-linejoin="round"/>
<text transform="translate(651.2,44.7) scale(1.44,1)" font-family="Liberation Sans, sans-serif" font-weight="bold" font-size="18.5" fill="#86dcb6" stroke="#36986c" stroke-width="0.95" paint-order="fill stroke" opacity="0.99">$</text></svg>
<span class="t" style="left:627px;top:35.5px;font-size:9.5px;color:#3a4a4a">$</span>
<svg style="left:0;top:0" width="920" height="410" viewBox="0 0 920 410"><path d="M894.6 65.6 L901.4 71.4 M901.4 65.6 L894.6 71.4" stroke="#0a2a86" stroke-width="1.35" fill="none"/><g transform="translate(897.7,391.3) rotate(45) scale(0.9)" stroke="#0a2a86" stroke-width="1.55" fill="#dfe9f8"><rect x="-2.3" y="-5.4" width="4.6" height="3.6" rx="1.2"/><path d="M-1.3 -1.8 V0.6 M1.3 -1.8 V0.6" fill="none"/><rect x="-3.3" y="0.6" width="6.6" height="2" rx="0.9"/><path d="M0 2.6 V6.6" stroke-width="1" stroke-dasharray="1.6 0.8"/></g></svg>
</body></html>
